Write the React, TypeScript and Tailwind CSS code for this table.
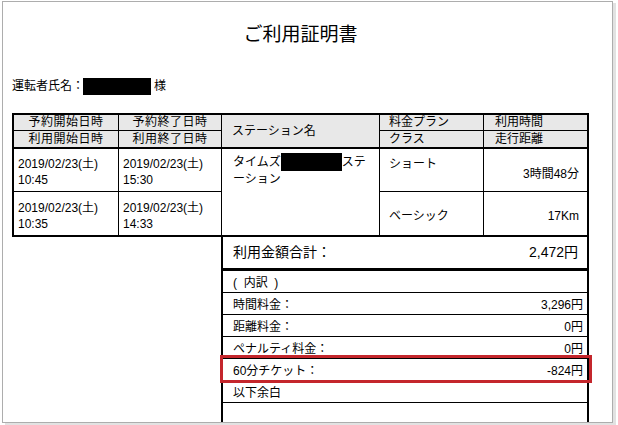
const font = { fontFamily: '"Liberation Sans", "Noto Sans CJK JP", sans-serif' };

const breakdown = [
  { label: "(  内訳  )", value: "" },
  { label: "時間料金：", value: "3,296円" },
  { label: "距離料金：", value: "0円" },
  { label: "ペナルティ料金：", value: "0円" },
  { label: "60分チケット：", value: "-824円", mark: true },
  { label: "以下余白", value: "" },
  { label: "", value: "" },
];

export default function App() {
  return (
    <div className="w-[618px] h-[425px] overflow-hidden bg-white text-black" style={font}>
      <div className="ml-[2px] mt-[1px] w-[611px] h-[422px] border border-[#adadad] bg-white pl-[9px] shadow-[3px_2px_0_#e2e2e2] overflow-hidden">
        <div className="mt-[23px] h-[20px] w-[577px] text-center text-[19px] leading-[20px]">ご利用証明書</div>

        <div className="mt-[33px] flex h-[17px] items-center text-[12px] leading-[17px]">
          <span>運転者氏名：</span>
          <span className="ml-[-1px] inline-block h-[17px] w-[68px] bg-black" />
          <span className="ml-[3px]">様</span>
        </div>

        <div className="mt-[18px] grid w-[577px] grid-cols-[105px_103px_158px_104px_103px] grid-rows-[16px_18px_43px_43px] border-2 border-black text-[12px] leading-[16px]">
          <div className="border-b border-r border-black bg-[#e8e8e8] text-center leading-[15px] tracking-[0.5px]">予約開始日時</div>
          <div className="border-b border-r border-black bg-[#e8e8e8] text-center leading-[15px] tracking-[0.5px]">予約終了日時</div>
          <div className="row-span-2 flex items-center border-b-2 border-r border-black bg-[#e8e8e8] pl-[10px]">ステーション名</div>
          <div className="border-b border-r border-black bg-[#e8e8e8] pl-[9px] leading-[15px]">料金プラン</div>
          <div className="border-b border-black bg-[#e8e8e8] pl-[11px] leading-[15px]">利用時間</div>

          <div className="border-b-2 border-r border-black bg-[#e8e8e8] text-center leading-[17px] tracking-[0.5px]">利用開始日時</div>
          <div className="border-b-2 border-r border-black bg-[#e8e8e8] text-center leading-[17px] tracking-[0.5px]">利用終了日時</div>
          <div className="border-b-2 border-r border-black bg-[#e8e8e8] pl-[9px] leading-[17px]">クラス</div>
          <div className="border-b-2 border-black bg-[#e8e8e8] pl-[11px] leading-[17px]">走行距離</div>

          <div className="border-b border-r border-black pl-[4px] pt-[7px]">
            2019/02/23(土)<br />10:45
          </div>
          <div className="border-b border-r border-black pl-[4px] pt-[7px]">
            2019/02/23(土)<br />15:30
          </div>
          <div className="row-span-2 border-r border-black pl-[11px] pt-[4px]">
            <div className="flex items-center">
              <span>タイムズ</span>
              <span className="inline-block h-[18px] w-[61px] bg-black" />
              <span>ステ</span>
            </div>
            <div>ーション</div>
          </div>
          <div className="border-b border-r border-black pl-[9px] pt-[7px]">ショート</div>
          <div className="border-b border-black pr-[8px] pt-[17px] text-right">3時間48分</div>

          <div className="border-r border-black pl-[4px] pt-[8px]">
            2019/02/23(土)<br />10:35
          </div>
          <div className="border-r border-black pl-[4px] pt-[8px]">
            2019/02/23(土)<br />14:33
          </div>
          <div className="border-r border-black pl-[9px] pt-[16px]">ベーシック</div>
          <div className="pr-[8px] pt-[16px] text-right">17Km</div>
        </div>

        <div className="ml-[209px] h-[200px] w-[368px] border-x-2 border-black">
          <div className="flex h-[34px] items-center justify-between border-b-[3px] border-black pl-[10px] pr-[9px] text-[14px]">
            <span>利用金額合計：</span>
            <span>2,472円</span>
          </div>
          {breakdown.map((row, i) => (
            <div
              key={i}
              className="relative flex h-[22px] items-center justify-between border-b border-black pl-[10px] pr-[4px] pt-[2px] text-[12px] leading-[16px]"
            >
              <span className="whitespace-pre">{row.label}</span>
              <span>{row.value}</span>
              {row.mark && (
                <div className="absolute left-[-3px] right-[-5px] top-[-4px] bottom-[-3px] border-[3px] border-[#c4262c]" />
              )}
            </div>
          ))}
        </div>
      </div>
    </div>
  );
}
